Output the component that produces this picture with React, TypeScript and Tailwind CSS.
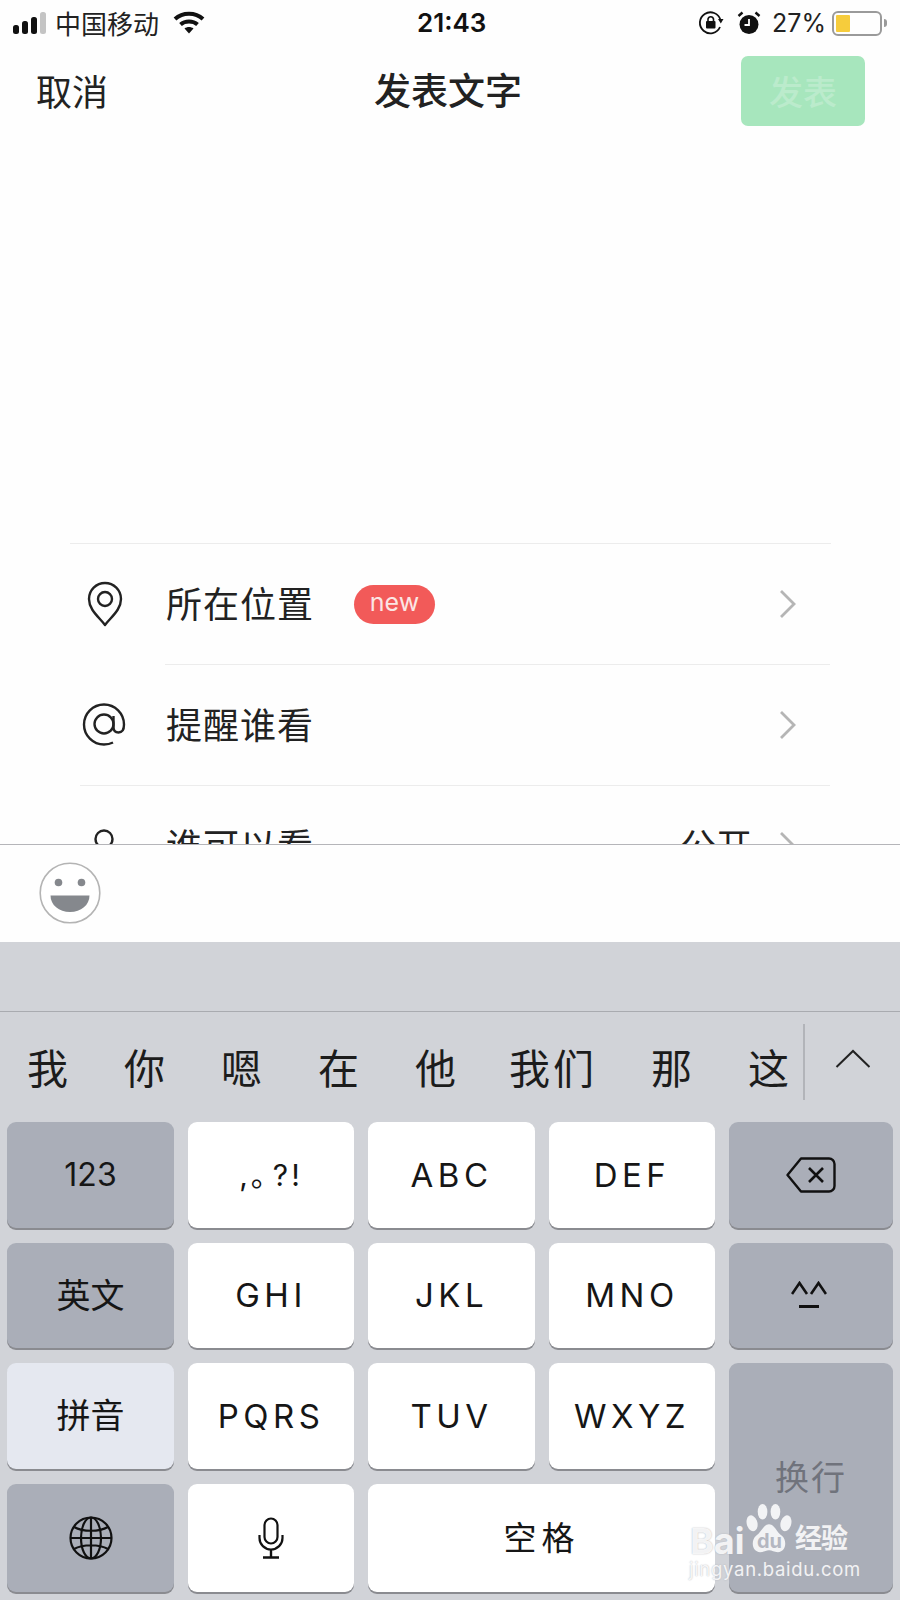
import React from "react";

const cjk = "font-['Noto_Sans_CJK_SC','Noto_Sans',sans-serif]";
const latin = "font-['Inter','Noto_Sans_CJK_SC',sans-serif]";

function Chevron() {
  return (
    <svg width="18" height="30" viewBox="0 0 18 30" fill="none" className="shrink-0">
      <path d="M2 2 L15 15 L2 28" stroke="#b5b5b5" strokeWidth="2.800" />
    </svg>
  );
}

function Row({ icon, label, badge, value }: { icon: React.ReactNode; label: string; badge?: boolean; value?: string }) {
  return (
    <div className="h-[120px] flex items-center pl-[87px] pr-[103px] shrink-0">
      <div className="w-[79px] shrink-0">{icon}</div>
      <span className="text-[36px] leading-none text-[#222] tracking-[1px] pb-[4px]">{label}</span>
      {badge && (
        <span className={`ml-[40px] w-[81px] h-[39px] rounded-full bg-[#f25a59] text-[#fbe6e4] text-[25px] leading-[34px] text-center ${latin}`}>new</span>
      )}
      <div className="flex-1" />
      {value && <span className="text-[36px] leading-none text-[#222] mr-[27px] pb-[4px]">{value}</span>}
      <Chevron />
    </div>
  );
}

function Key({ children, kind = "light", className = "" }: { children: React.ReactNode; kind?: "light" | "dark" | "pale"; className?: string }) {
  const bg = kind === "light" ? "bg-white" : kind === "dark" ? "bg-[#aaaeb8]" : "bg-[#e5e8f0]";
  return (
    <div className={`${bg} rounded-[9px] shadow-[0_2px_0_#8a8b90] flex items-center justify-center text-[#161616] ${className}`}>
      {children}
    </div>
  );
}

function Letters({ t }: { t: string }) {
  return <span className={`text-[33px] tracking-[4.500px] leading-none ${latin}`}>{t}</span>;
}

export default function App() {
  return (
    <div className={`relative w-[900px] h-[1600px] overflow-hidden bg-[#fefefe] flex flex-col ${cjk}`}>
      <div className="h-[844px] shrink-0 overflow-hidden flex flex-col">
        {/* status bar */}
        <div className="h-[46px] shrink-0 flex items-center pl-[13px] pr-[13px]">
          <svg width="36" height="24" viewBox="0 0 36 24" className="shrink-0">
            <rect x="0" y="14" width="6" height="9" rx="2.500" fill="#111" />
            <rect x="9" y="10" width="6" height="13" rx="2.500" fill="#111" />
            <rect x="18" y="6" width="6" height="17" rx="2.500" fill="#111" />
            <rect x="27" y="1" width="6" height="22" rx="2.500" fill="#c4c4c4" />
          </svg>
          <span className="ml-[6px] text-[26px] leading-none text-[#222]">中国移动</span>
          <svg width="32" height="24" viewBox="0 0 32 24" className="ml-[14px] shrink-0" fill="none">
            <path d="M2 8 C9.500 1 22.500 1 30 8" stroke="#111" strokeWidth="4" />
            <path d="M7.500 13.500 C12 9.500 20 9.500 24.500 13.500" stroke="#111" strokeWidth="4" />
            <path d="M11.500 17.500 L16 22.500 L20.500 17.500 C18 15.500 14 15.500 11.500 17.500Z" fill="#111" />
          </svg>
          <span className={`ml-[212px] text-[26px] leading-none font-semibold text-[#111] ${latin}`}>21:43</span>
          <div className="flex-1" />
          <svg width="26" height="26" viewBox="0 0 26 26" fill="none" className="shrink-0">
            <path d="M22 17 A10.500 10.500 0 1 1 22.500 10" stroke="#111" strokeWidth="1.800" />
            <path d="M20 9 L25.500 9 L22.800 13.500Z" fill="#111" />
            <rect x="8" y="11" width="9.500" height="7.500" rx="1" fill="#111" />
            <path d="M10 11 V9 A2.800 2.800 0 0 1 15.500 9 V11" stroke="#111" strokeWidth="1.600" />
          </svg>
          <svg width="26" height="26" viewBox="0 0 26 26" fill="none" className="ml-[12px] shrink-0">
            <circle cx="13" cy="14.500" r="9.500" fill="#111" />
            <path d="M13 9 V15 H8.500" stroke="#fff" strokeWidth="1.800" />
            <path d="M2.500 6 L6.500 2.500 M23.500 6 L19.500 2.500" stroke="#111" strokeWidth="2.400" />
          </svg>
          <span className={`ml-[10px] text-[25px] leading-none text-[#222] ${latin}`}>27%</span>
          <div className="ml-[6px] w-[50px] h-[25px] rounded-[6px] border-[2px] border-[#9a9a9a] p-[2px] shrink-0">
            <div className="h-full w-[14px] bg-[#f6cc3c] rounded-[1px]" />
          </div>
          <div className="ml-[2px] w-[3px] h-[8px] bg-[#9a9a9a] rounded-r-full shrink-0" />
        </div>

        {/* nav */}
        <div className="h-[89px] shrink-0 flex items-center pl-[36px] pr-[35px]">
          <span className="text-[36px] leading-none text-[#222] pb-[2px]">取消</span>
          <span className="ml-[266px] text-[37px] leading-none text-[#222] font-medium pb-[2px]">发表文字</span>
          <div className="flex-1" />
          <div className="w-[124px] h-[70px] rounded-[7px] bg-[#a7e6bd] flex items-center justify-center text-[34px] leading-none text-[#bbebcc] font-medium">
            发表
          </div>
        </div>

        <div className="h-[408px] shrink-0" />

        <div className="h-px shrink-0 ml-[70px] mr-[69px] bg-[#ececec]" />
        <Row
          label="所在位置"
          badge
          icon={
            <svg width="36" height="46" viewBox="0 0 36 46" fill="none">
              <path d="M18 44 C12 36 2 29 2 18 A16 16 0 0 1 34 18 C34 29 24 36 18 44Z" stroke="#222" strokeWidth="2.400" strokeLinejoin="round" />
              <circle cx="18" cy="18" r="7" stroke="#222" strokeWidth="2.400" />
            </svg>
          }
        />
        <div className="h-px shrink-0 ml-[165px] mr-[70px] bg-[#ececec]" />
        <Row
          label="提醒谁看"
          icon={
            <svg width="44" height="44" viewBox="0 0 44 44" fill="none" className="-ml-[5px]">
              <path d="M31 39.500 C28 41 25 41.500 22 41.500 A20 20 0 1 1 42 21.500 C42 27 39.500 29.500 36.500 29.500 C33.500 29.500 31.500 27.500 31.500 24 V13" stroke="#222" strokeWidth="2.400" />
              <circle cx="22" cy="21" r="9.500" stroke="#222" strokeWidth="2.400" />
            </svg>
          }
        />
        <div className="h-px shrink-0 ml-[80px] mr-[70px] bg-[#ececec]" />
        <Row
          label="谁可以看"
          value="公开"
          icon={
            <svg width="36" height="46" viewBox="0 0 36 46" fill="none">
              <circle cx="17" cy="16" r="8.500" stroke="#222" strokeWidth="2.400" />
            </svg>
          }
        />
      </div>

      {/* toolbar */}
      <div className="h-[98px] shrink-0 border-t border-[#b5b5b9] flex items-center pl-[39px] pb-[2px]">
        <svg width="62" height="62" viewBox="0 0 62 62" fill="none">
          <circle cx="31" cy="31" r="29.800" fill="#fff" stroke="#b4b4b4" strokeWidth="1.600" />
          <circle cx="19.500" cy="20.500" r="3.800" fill="#85888d" />
          <circle cx="42.500" cy="20.500" r="3.800" fill="#85888d" />
          <path d="M11.500 33.500 H50.500 C50.500 43 42 50 31 50 C20 50 11.500 43 11.500 33.500Z" fill="#85888d" />
        </svg>
      </div>

      {/* keyboard */}
      <div className="flex-1 bg-[#d1d3d8] flex flex-col">
        <div className="h-[70px] shrink-0 border-b border-[#a9abb0]" />
        <div className="h-[110px] shrink-0 flex items-center pl-[27px]">
          <div className="flex gap-[56px] text-[41px] leading-none text-[#1c1c1c] w-[776px] pb-[2px]">
            {["我", "你", "嗯", "在", "他", "我们", "那", "这"].map((c) => (
              <span key={c} className={c === "我们" ? "tracking-[3px] -ml-[3px] -mr-[2px]" : ""}>{c}</span>
            ))}
          </div>
          <div className="w-[2px] h-[76px] bg-[#b2b4b9] shrink-0 mb-[11px]" />
          <svg width="36" height="20" viewBox="0 0 36 20" fill="none" className="ml-[30px] shrink-0 mb-[16px]">
            <path d="M1.500 18 L18 2 L34.500 18" stroke="#222" strokeWidth="2" />
          </svg>
        </div>
        <div className="grid grid-cols-[167px_166px_167px_166px_164px] grid-rows-[106px_105px_106px_108px] gap-x-[14px] gap-y-[15px] pl-[7px]">
          <Key kind="dark"><span className={`text-[32px] leading-none ${latin}`}>123</span></Key>
          <Key>
            <span className={`text-[30px] tracking-[3px] leading-none ${latin}`}>
              ,<span className="-mr-[11px]">。</span>?!
            </span>
          </Key>
          <Key><Letters t="ABC" /></Key>
          <Key><Letters t="DEF" /></Key>
          <Key kind="dark">
            <svg width="50" height="36" viewBox="0 0 50 36" fill="none">
              <path d="M15 1.500 H43 A5.500 5.500 0 0 1 48.500 7 V29 A5.500 5.500 0 0 1 43 34.500 H15 L1.500 18Z" stroke="#111" strokeWidth="2.400" strokeLinejoin="round" />
              <path d="M23 11 L37 25 M37 11 L23 25" stroke="#111" strokeWidth="2.600" />
            </svg>
          </Key>

          <Key kind="dark"><span className="text-[34px] leading-none pb-[4px]">英文</span></Key>
          <Key><Letters t="GHI" /></Key>
          <Key><Letters t="JKL" /></Key>
          <Key><Letters t="MNO" /></Key>
          <Key kind="dark">
            <svg width="36" height="28" viewBox="0 0 36 28" fill="none" className="-ml-[4px] -mt-[1px]">
              <path d="M1 13 L8.500 2 L16 13 M20 13 L27.500 2 L35 13" stroke="#111" strokeWidth="2.600" />
              <path d="M8 25.500 H28" stroke="#111" strokeWidth="3" />
            </svg>
          </Key>

          <Key kind="pale"><span className="text-[34px] leading-none pb-[4px]">拼音</span></Key>
          <Key><Letters t="PQRS" /></Key>
          <Key><Letters t="TUV" /></Key>
          <Key><Letters t="WXYZ" /></Key>
          <Key kind="dark" className="row-span-2">
            <span className="text-[34px] leading-none text-[#70737c] tracking-[2px] pb-[4px]">换行</span>
          </Key>

          <Key kind="dark">
            <svg width="44" height="44" viewBox="0 0 44 44" fill="none" stroke="#111" strokeWidth="2.200">
              <circle cx="22" cy="22" r="20.500" />
              <ellipse cx="22" cy="22" rx="10" ry="20.500" />
              <path d="M22 1.500 V42.500 M1.500 22 H42.500 M5 11 C14 16 30 16 39 11 M5 33 C14 28 30 28 39 33" />
            </svg>
          </Key>
          <Key>
            <svg width="26" height="42" viewBox="0 0 26 42" fill="none">
              <rect x="6.500" y="1.500" width="13" height="25" rx="6.500" stroke="#111" strokeWidth="2.200" />
              <path d="M1.500 18 V21 A11.500 11.500 0 0 0 24.500 21 V18" stroke="#111" strokeWidth="2.200" />
              <path d="M13 33 V40 M5 40.500 H21" stroke="#111" strokeWidth="2.400" />
            </svg>
          </Key>
          <Key className="col-span-2"><span className="text-[33px] tracking-[5px] leading-none pb-[4px]">空格</span></Key>
        </div>
      </div>

      {/* watermark */}
      <div className="absolute left-[689px] top-[1502px] w-[165px] h-[80px] text-white/85 [text-shadow:0_0_1.500px_#a9abb3]">
        <svg width="50" height="52" viewBox="0 0 62 54" preserveAspectRatio="none" className="absolute left-[55px] top-[2px]" fill="#ffffff" fillOpacity="0.85">
          <ellipse cx="10" cy="20" rx="6.500" ry="8.500" transform="rotate(-25 10 20)" />
          <ellipse cx="23" cy="8" rx="6" ry="8" />
          <ellipse cx="39" cy="8" rx="6" ry="8" />
          <ellipse cx="52" cy="20" rx="6.500" ry="8.500" transform="rotate(25 52 20)" />
          <path d="M31 21 C38 21 40 29 47 33 C54 38 52 50 42 50 C37 50 35 48 31 48 C27 48 25 50 20 50 C10 50 8 38 15 33 C22 29 24 21 31 21Z" />
        </svg>
        <span className={`absolute left-[1px] top-[21px] text-[36px] leading-none font-bold ${latin}`}>Bai</span>
        <span className={`absolute left-[68px] top-[29px] text-[20px] leading-none font-bold text-[#b4b7c1] [text-shadow:none] ${latin}`}>du</span>
        <span className="absolute left-[106px] top-[21px] text-[27px] leading-none font-bold tracking-[-1px]">经验</span>
        <span className={`absolute left-0 top-[58px] text-[18.500px] leading-none tracking-[0.700px] ${latin}`}>jingyan.baidu.com</span>
      </div>
    </div>
  );
}
